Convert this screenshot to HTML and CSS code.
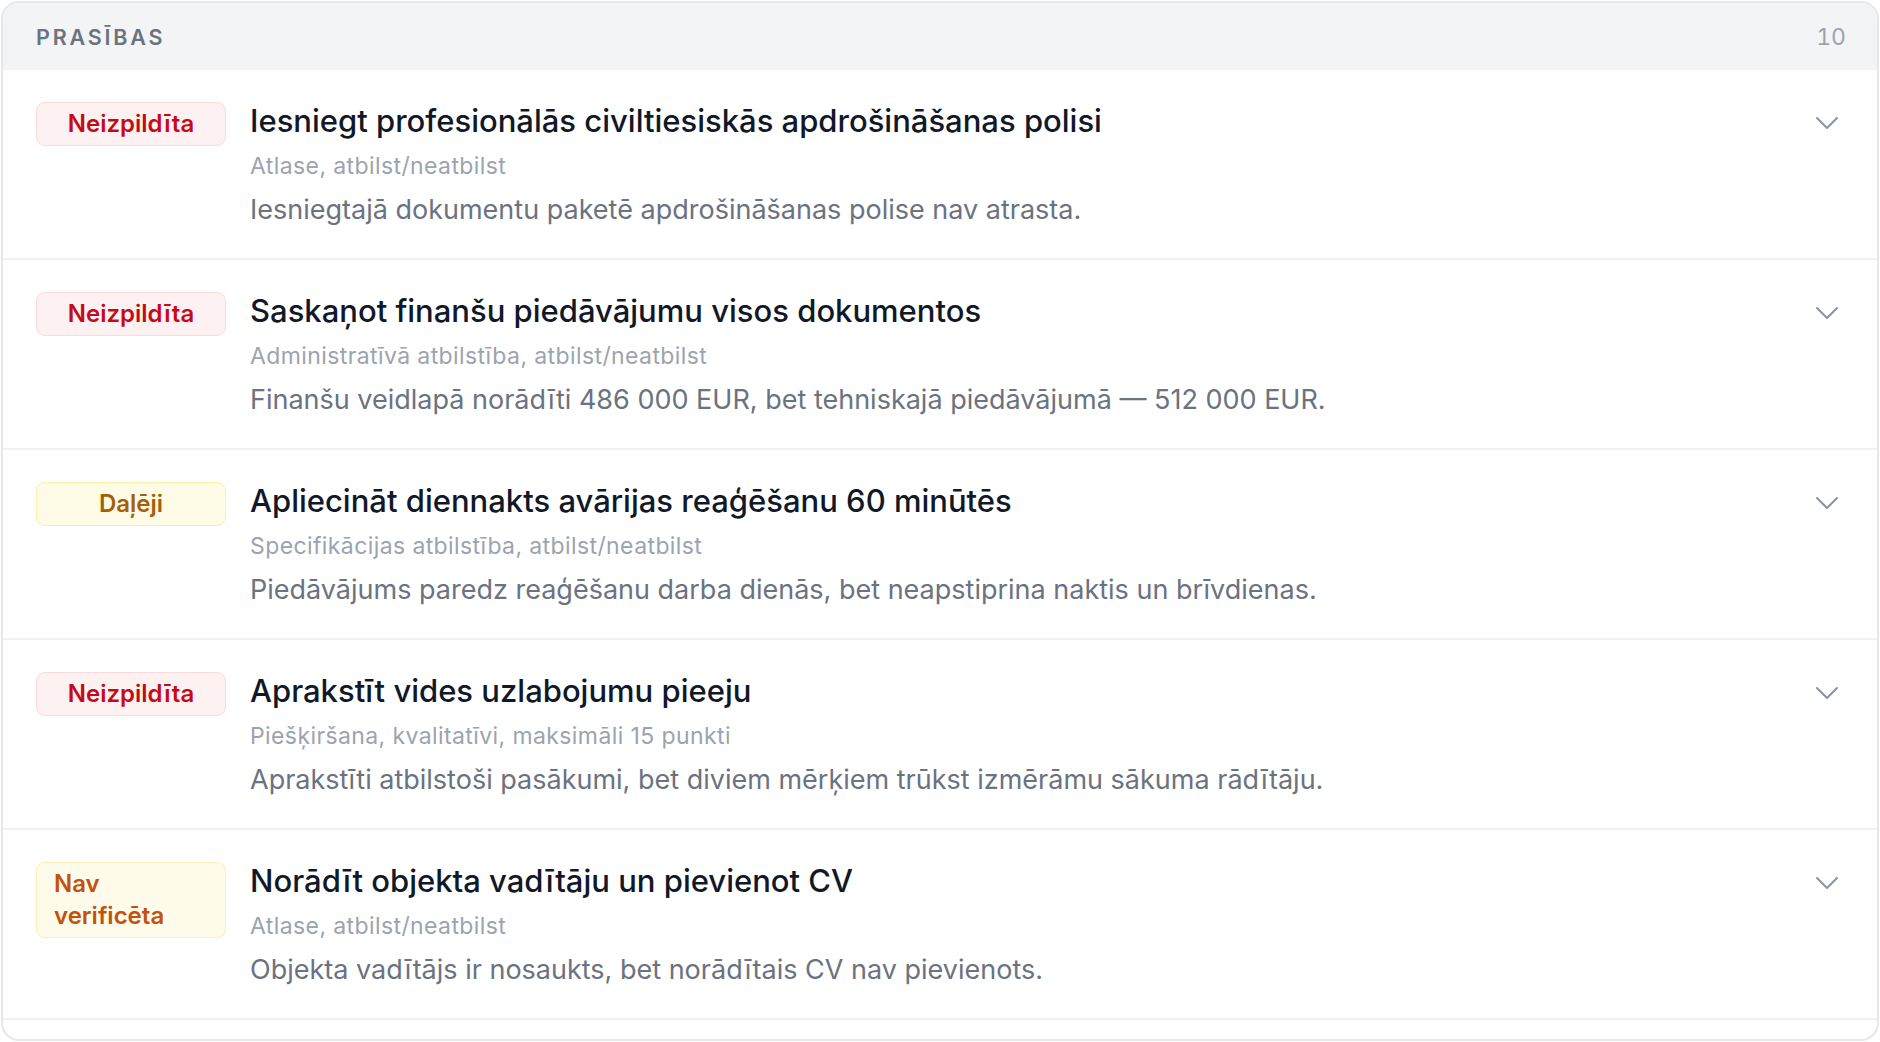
FILE: index.html
```html
<!DOCTYPE html>
<html lang="lv">
<head>
<meta charset="utf-8">
<title>Prasības</title>
<link rel="stylesheet" href="styles.css">
</head>
<body>
<section class="card">
  <header class="card-head">
    <span class="card-title">Prasības</span>
    <span class="card-count">10</span>
  </header>
  <ul class="req-list">
    <li class="req">
      <span class="badge badge-fail">Neizpildīta</span>
      <div class="req-body">
        <h3 class="req-title">Iesniegt profesionālās civiltiesiskās apdrošināšanas polisi</h3>
        <p class="req-meta">Atlase, atbilst/neatbilst</p>
        <p class="req-desc">Iesniegtajā dokumentu paketē apdrošināšanas polise nav atrasta.</p>
      </div>
      <svg class="chev" viewBox="0 0 24 14" width="24" height="14"><path d="M2 2l10 10L22 2"/></svg>
    </li>
    <li class="req">
      <span class="badge badge-fail">Neizpildīta</span>
      <div class="req-body">
        <h3 class="req-title">Saskaņot finanšu piedāvājumu visos dokumentos</h3>
        <p class="req-meta">Administratīvā atbilstība, atbilst/neatbilst</p>
        <p class="req-desc">Finanšu veidlapā norādīti 486 000 EUR, bet tehniskajā piedāvājumā — 512 000 EUR.</p>
      </div>
      <svg class="chev" viewBox="0 0 24 14" width="24" height="14"><path d="M2 2l10 10L22 2"/></svg>
    </li>
    <li class="req">
      <span class="badge badge-partial">Daļēji</span>
      <div class="req-body">
        <h3 class="req-title">Apliecināt diennakts avārijas reaģēšanu 60 minūtēs</h3>
        <p class="req-meta">Specifikācijas atbilstība, atbilst/neatbilst</p>
        <p class="req-desc">Piedāvājums paredz reaģēšanu darba dienās, bet neapstiprina naktis un brīvdienas.</p>
      </div>
      <svg class="chev" viewBox="0 0 24 14" width="24" height="14"><path d="M2 2l10 10L22 2"/></svg>
    </li>
    <li class="req">
      <span class="badge badge-fail">Neizpildīta</span>
      <div class="req-body">
        <h3 class="req-title">Aprakstīt vides uzlabojumu pieeju</h3>
        <p class="req-meta">Piešķiršana, kvalitatīvi, maksimāli 15 punkti</p>
        <p class="req-desc">Aprakstīti atbilstoši pasākumi, bet diviem mērķiem trūkst izmērāmu sākuma rādītāju.</p>
      </div>
      <svg class="chev" viewBox="0 0 24 14" width="24" height="14"><path d="M2 2l10 10L22 2"/></svg>
    </li>
    <li class="req">
      <span class="badge badge-unverified">Nav verificēta</span>
      <div class="req-body">
        <h3 class="req-title">Norādīt objekta vadītāju un pievienot CV</h3>
        <p class="req-meta">Atlase, atbilst/neatbilst</p>
        <p class="req-desc">Objekta vadītājs ir nosaukts, bet norādītais CV nav pievienots.</p>
      </div>
      <svg class="chev" viewBox="0 0 24 14" width="24" height="14"><path d="M2 2l10 10L22 2"/></svg>
    </li>
  </ul>
</section>
</body>
</html>
```
FILE: styles.css
```css
* { box-sizing: border-box; }
html, body { margin: 0; padding: 0; background: #ffffff; }
body {
  font-family: Inter, "Noto Sans", "Liberation Sans", sans-serif;
  padding: 1px;
}
.card {
  height: 1040px;
  border: 2px solid #e6e7eb;
  border-radius: 18px;
  overflow: hidden;
  background: #fff;
  display: flex;
  flex-direction: column;
}
.card-head {
  flex: none;
  height: 67px;
  background: #f3f4f5;
  display: flex;
  align-items: center;
  justify-content: space-between;
  padding: 0 31px 0 33px;
}
.card-title {
  font-size: 21.5px;
  font-weight: 600;
  letter-spacing: 0.13em;
  text-transform: uppercase;
  color: #6b7280;
}
.card-count {
  font-size: 23px;
  font-variant-numeric: tabular-nums;
  color: #9ca3af;
}
.req-list {
  list-style: none;
  margin: 0;
  padding: 0;
}
.req {
  display: flex;
  align-items: flex-start;
  gap: 24px;
  padding: 32px 30px 30px 33px;
  border-bottom: 2px solid #f1f2f4;
  height: 190px;
}
.badge {
  flex: none;
  width: 190px;
  display: flex;
  justify-content: center;
  padding: 5px 17px;
  border: 1.5px solid;
  border-radius: 9px;
  font-size: 24px;
  line-height: 32px;
  font-weight: 600;
}
.badge-fail { background: #fef1f1; border-color: #fddada; color: #c40c19; }
.badge-partial { background: #fefbe7; border-color: #fdf0a8; color: #a65f06; }
.badge-unverified { background: #fffbea; border-color: #fdeeb5; color: #c2520c; }
.req-body { flex: 1; min-width: 0; }
.req-title {
  margin: 0;
  font-size: 31px;
  line-height: 38px;
  font-weight: 500;
  color: #111827;
}
.req-meta {
  margin: 10px 0 0;
  font-size: 23px;
  letter-spacing: 0.4px;
  line-height: 32px;
  color: #9ca3af;
}
.req-desc {
  margin: 10px 0 0;
  font-size: 27px;
  line-height: 36px;
  color: #6b7280;
}
.chev {
  flex: none;
  margin-top: 14px;
  margin-right: 8px;
  fill: none;
  stroke: #8a93a2;
  stroke-width: 2;
  stroke-linecap: round;
  stroke-linejoin: round;
}
```
